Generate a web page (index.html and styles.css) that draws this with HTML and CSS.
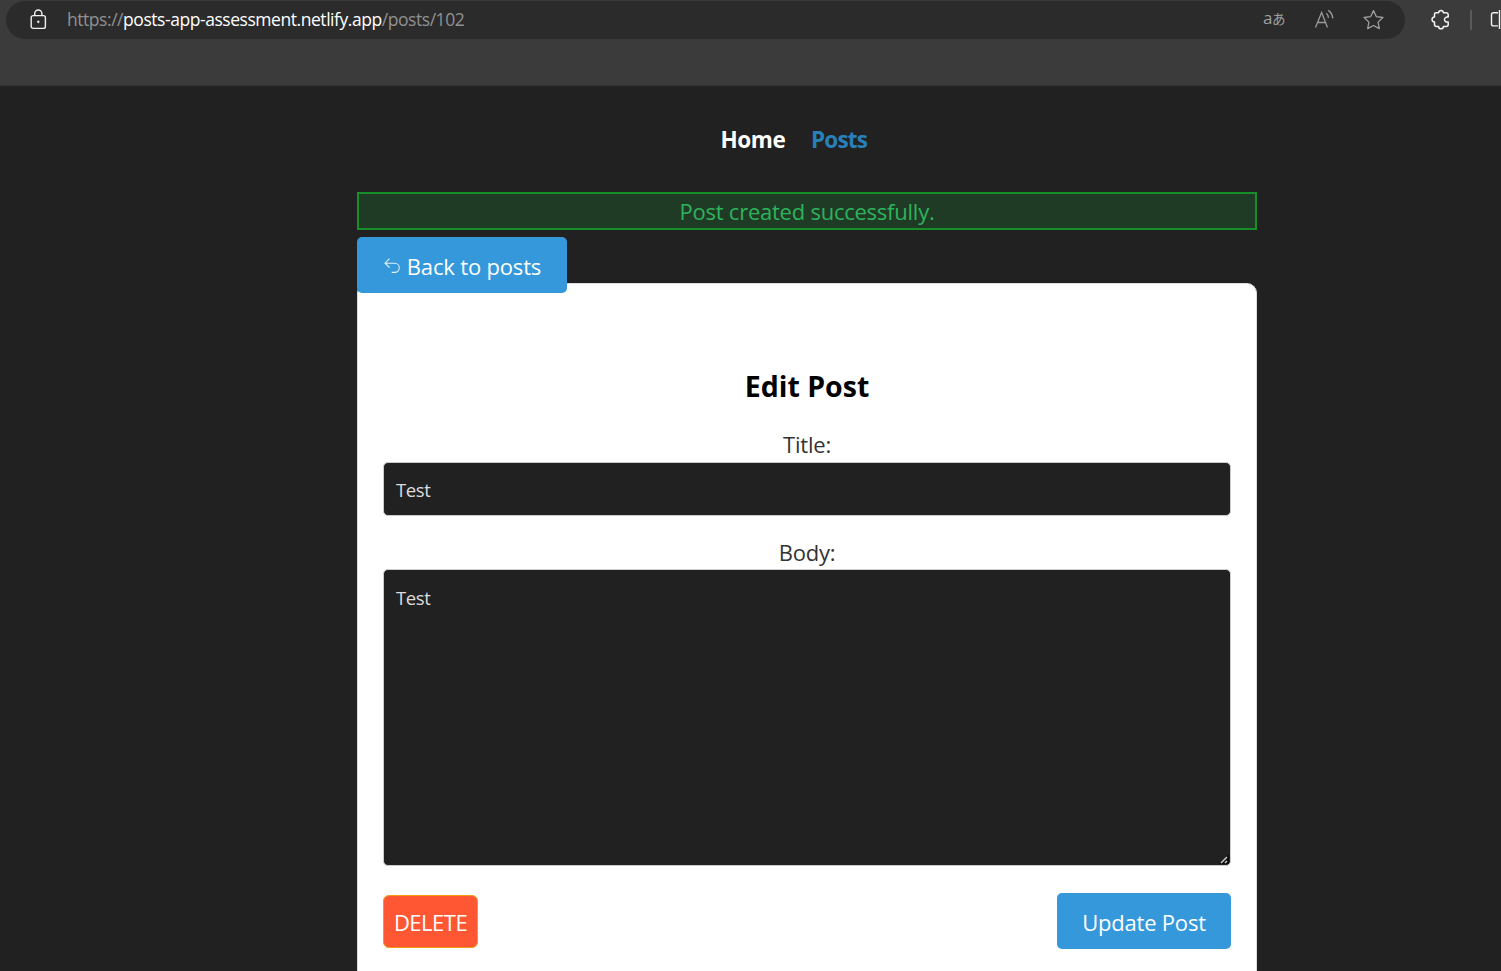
FILE: index.html
```html
<!DOCTYPE html>
<html lang="en">
<head>
<meta charset="utf-8">
<title>Edit Post</title>
<link rel="stylesheet" href="styles.css">
</head>
<body>
<header class="browser">
  <div class="address">
    <svg class="lock" width="18" height="22" viewBox="0 0 18 22" fill="none" stroke="#f0f0f0" stroke-width="1.4"><rect x="1.2" y="6.6" width="14.2" height="12.8" rx="2"/><path d="M4.7 6.6V4.6a3.6 3.6 0 0 1 7.2 0v2"/><circle cx="8.3" cy="12.8" r=".9" fill="#f0f0f0" stroke-width=".8"/></svg>
    <span class="url">https://<span class="host">posts-app-assessment.netlify.app</span>/posts/102</span>
    <div class="tools">
      <span class="translate">a<span class="kana">あ</span></span>
      <svg class="read" width="22" height="22" viewBox="0 0 22 22" fill="none" stroke="#9a9a9a" stroke-width="1.3"><path d="M1.5 18.5 7.6 3.5 13.5 18.5M3.6 13.5h7.9M12.3 4.2c1.3 1.2 2 2.8 2.2 4.7M14.3 1.4c2.7 1.8 4.2 4.3 4.5 8.1"/></svg>
      <svg class="star" width="22" height="22" viewBox="0 0 22 22" fill="none" stroke="#a0a0a0" stroke-width="1.3" stroke-linejoin="round"><path d="m10.5 1.6 2.8 6 6.6.9-4.8 4.6 1.2 6.5-5.8-3.1-5.8 3.1 1.2-6.5-4.8-4.6 6.6-.9z"/></svg>
    </div>
  </div>
  <svg class="puzzle" width="22" height="22" viewBox="0 0 22 22" fill="none" stroke="#f4f4f4" stroke-width="1.5" stroke-linejoin="round"><path d="M6 3.7h2.6c.3-3 4.5-3 4.8 0h2.8a2 2 0 0 1 2 2v2.4c-1.5-.4-3.7.2-3.7 2.4s2.2 2.9 3.7 2.4v2.7a2 2 0 0 1-2 2h-2.8c-.3 3-4.5 3-4.8 0H6.5a2 2 0 0 1-2-2v-2.5c-3.3-.3-3.3-4.8 0-5.1V5.2A1.5 1.5 0 0 1 6 3.7z"/></svg>
  <span class="divider"></span>
  <svg class="split" width="12" height="22" viewBox="0 0 12 22" fill="none" stroke="#f4f4f4" stroke-width="1.4"><path d="M9 3.7H4.5a2 2 0 0 0-2 2v9.2a2 2 0 0 0 2 2H9M10.5 1v19"/></svg>
</header>
<main class="page">
  <nav class="nav"><a class="home">Home</a><a class="posts">Posts</a></nav>
  <div class="alert"><span>Post created successfully.</span></div>
  <a class="button back"><svg width="17" height="16" viewBox="0 0 17 16" fill="none" stroke="#e1f0fa" stroke-width="1.1"><path d="M5.5.7 1 5.2l4.5 4.3M1 5.2h9.7a4.6 4.6 0 0 1 0 9.2H7.7"/></svg><span>Back to posts</span></a>
  <form class="card">
    <h1 class="heading"><span>Edit Post</span></h1>
    <label class="label title-label">Title:</label>
    <input class="field" value="Test">
    <label class="label body-label">Body:</label>
    <div class="body-wrap">
      <textarea class="field body-field">Test</textarea>
      <svg class="grip" width="12" height="12" viewBox="0 0 12 12" fill="none"><path d="M1 11 11 1v10z" fill="#0c0c0c"/><path d="m3 10 6-6M7 10l2-2" stroke="#d0d0d0" stroke-width="1.5"/></svg>
    </div>
    <div class="actions">
      <button type="button" class="delete">DELETE</button>
      <button type="button" class="button update">Update Post</button>
    </div>
  </form>
</main>
</body>
</html>
```
FILE: styles.css
```css
* { box-sizing: border-box; }
body { margin: 0; height: 971px; overflow: hidden; background: #212121; font-family: "Open Sans", "Noto Sans CJK JP", sans-serif; }
.browser { display: flex; height: 86px; padding: 1px 0 0 6px; background: #3b3b3b; border-bottom: 1px solid #343434; overflow: hidden; }
.address { display: flex; align-items: center; flex: none; width: 1399px; height: 38px; padding: 0 20px 0 24px; border-radius: 19px; background: #2b2b2b; }
.lock { margin: -1px 19px 0 0; }
.url { margin-top: -2px; color: #919191; font-size: 17.5px; letter-spacing: -.45px; white-space: nowrap; }
.host { color: #fff; }
.tools { display: flex; align-items: center; margin-left: auto; }
.translate { width: 24px; margin: -3px 27px 0 0; color: #a0a0a0; font: 17px/22px "Open Sans", "Noto Sans CJK JP", sans-serif; letter-spacing: -.5px; white-space: nowrap; }
.kana { font-size: 13.5px; }
.read { margin-right: 27px; }
.puzzle { flex: none; margin: 8px 0 0 25px; }
.divider { flex: none; width: 2px; height: 20px; margin: 9px 0 0 18px; background: #5b5b5b; }
.split { flex: none; margin: 8px 0 0 17px; }
.page { width: 900px; margin-left: 357px; padding-top: 38px; }
.nav { display: flex; height: 68px; padding-left: 363.5px; color: #fff; font-size: 22.5px; line-height: 32px; font-weight: 700; white-space: nowrap; }
.home { width: 90.5px; letter-spacing: -.4px; }
.posts { color: #2980b9; letter-spacing: -.8px; }
.alert { display: flex; justify-content: center; align-items: center; height: 38px; border: 2px solid #168f28; background: #203b25; color: #2eb35c; font-size: 22px; letter-spacing: -.24px; }
.button { display: flex; align-items: center; justify-content: center; height: 56px; border: 0; border-radius: 5px; background: #3498db; color: #fff; font: 22px "Open Sans", sans-serif; }
.back { position: relative; width: 210px; margin-top: 7px; gap: 6px; padding: 2px 0 0 1px; letter-spacing: -.17px; }
.back svg { margin-top: 0; }
.card { height: 720px; margin-top: -10px; padding: 82px 26px 0; border: 1px solid #ddd; border-radius: 10px; background: #fff; }
.heading { margin: 0; height: 62px; font-size: 28.5px; line-height: 40px; text-align: center; letter-spacing: 0; }
.label { display: block; height: 34px; color: #333; font-size: 22px; line-height: 32px; text-align: center; letter-spacing: -.2px; }
.field { display: block; width: 848px; height: 54px; margin-left: -1px; padding: 1px 12px 0; border: 1px solid #ccc; border-radius: 5px; outline: 0; background: #212121; color: #ddd; font: 18.5px/24px "Open Sans", sans-serif; letter-spacing: -.4px; }
.label.body-label { height: 33px; margin-top: 20px; }
.body-wrap { position: relative; }
.body-field { height: 297px; padding-top: 16px; resize: none; }
.grip { position: absolute; right: 0; bottom: 1px; }
.actions { display: flex; justify-content: space-between; width: 848px; margin: 27px 0 0 -1px; }
.delete { width: 95px; height: 53px; margin-top: 2px; padding: 0; border: 1px solid #f39c12; border-radius: 6px; background: #ff5733; color: #fff; font: 22px "Open Sans", sans-serif; letter-spacing: -.5px; }
.update { width: 174px; padding: 2px 0 0; letter-spacing: -.2px; }
```
